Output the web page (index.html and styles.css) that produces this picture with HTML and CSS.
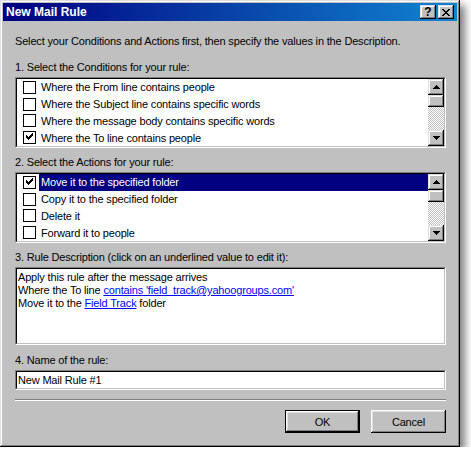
FILE: index.html
```html
<!DOCTYPE html>
<html>
<head>
<meta charset="utf-8">
<title>New Mail Rule</title>
<link rel="stylesheet" href="styles.css">
</head>
<body>
<div class="window">
  <div class="titlebar">
    <span class="title">New Mail Rule</span>
    <div class="caption-buttons">
      <div class="cap-btn help">?</div>
      <div class="cap-btn close">
        <svg width="8" height="7" viewBox="0 0 8 7" shape-rendering="crispEdges"><path d="M0 0h2v1H0zM6 0h2v1H6zM1 1h2v1H1zM5 1h2v1H5zM2 2h4v1H2zM3 3h2v1H3zM2 4h4v1H2zM1 5h2v1H1zM5 5h2v1H5zM0 6h2v1H0zM6 6h2v1H6z" fill="#000"/></svg>
      </div>
    </div>
  </div>
  <div class="body">
    <p class="intro">Select your Conditions and Actions first, then specify the values in the Description.</p>

    <div class="section-label first">1. Select the Conditions for your rule:</div>
    <div class="sunken listbox">
      <div class="sunken-inner list-inner">
        <ul class="rows">
          <li class="row"><span class="check"></span><span class="row-text">Where the From line contains people</span></li>
          <li class="row"><span class="check"></span><span class="row-text">Where the Subject line contains specific words</span></li>
          <li class="row"><span class="check"></span><span class="row-text">Where the message body contains specific words</span></li>
          <li class="row"><span class="check checked"><svg width="11" height="11" viewBox="0 0 11 11" shape-rendering="crispEdges"><path d="M8 1h1v3H8zM7 2h1v3H7zM6 3h1v3H6zM5 4h1v3H5zM4 5h1v3H4zM3 4h1v3H3zM2 3h1v3H2z" fill="#000"/></svg></span><span class="row-text">Where the To line contains people</span></li>
        </ul>
        <div class="scrollbar">
          <div class="sb-btn"><svg width="7" height="4" viewBox="0 0 7 4" shape-rendering="crispEdges"><path d="M3 0h1v1H3zM2 1h3v1H2zM1 2h5v1H1zM0 3h7v1H0z" fill="#000"/></svg></div>
          <div class="sb-thumb"></div>
          <div class="sb-track"></div>
          <div class="sb-btn"><svg width="7" height="4" viewBox="0 0 7 4" shape-rendering="crispEdges"><path d="M0 0h7v1H0zM1 1h5v1H1zM2 2h3v1H2zM3 3h1v1H3z" fill="#000"/></svg></div>
        </div>
      </div>
    </div>

    <div class="section-label">2. Select the Actions for your rule:</div>
    <div class="sunken listbox">
      <div class="sunken-inner list-inner">
        <ul class="rows">
          <li class="row selected"><span class="check checked"><svg width="11" height="11" viewBox="0 0 11 11" shape-rendering="crispEdges"><path d="M8 1h1v3H8zM7 2h1v3H7zM6 3h1v3H6zM5 4h1v3H5zM4 5h1v3H4zM3 4h1v3H3zM2 3h1v3H2z" fill="#000"/></svg></span><span class="row-text">Move it to the specified folder</span></li>
          <li class="row"><span class="check"></span><span class="row-text">Copy it to the specified folder</span></li>
          <li class="row"><span class="check"></span><span class="row-text">Delete it</span></li>
          <li class="row"><span class="check"></span><span class="row-text">Forward it to people</span></li>
        </ul>
        <div class="scrollbar">
          <div class="sb-btn"><svg width="7" height="4" viewBox="0 0 7 4" shape-rendering="crispEdges"><path d="M3 0h1v1H3zM2 1h3v1H2zM1 2h5v1H1zM0 3h7v1H0z" fill="#000"/></svg></div>
          <div class="sb-thumb"></div>
          <div class="sb-track"></div>
          <div class="sb-btn"><svg width="7" height="4" viewBox="0 0 7 4" shape-rendering="crispEdges"><path d="M0 0h7v1H0zM1 1h5v1H1zM2 2h3v1H2zM3 3h1v1H3z" fill="#000"/></svg></div>
        </div>
      </div>
    </div>

    <div class="section-label">3. Rule Description (click on an underlined value to edit it):</div>
    <div class="sunken descbox">
      <div class="sunken-inner desc-inner">
        <div>Apply this rule after the message arrives</div>
        <div>Where the To line <a class="link" href="#">contains 'field_track@yahoogroups.com'</a></div>
        <div>Move it to the <a class="link" href="#">Field Track</a> folder</div>
      </div>
    </div>

    <div class="section-label l4">4. Name of the rule:</div>
    <div class="sunken textbox">
      <div class="sunken-inner text-inner">New Mail Rule #1</div>
    </div>

    <div class="separator"></div>

    <div class="buttons">
      <div class="btn default">OK</div>
      <div class="btn">Cancel</div>
    </div>
  </div>
</div>
</body>
</html>
```

FILE: styles.css
```css
* { box-sizing: border-box; }
html, body { margin: 0; padding: 0; background: #fff; }
body {
  font-family: "Liberation Sans", Arial, sans-serif;
  font-size: 11px;
  letter-spacing: -0.17px;
  color: #000;
}

.window {
  width: 460px;
  height: 447px;
  background: #c0c0c0;
  padding: 3px;
  display: flex;
  flex-direction: column;
  box-shadow: inset -1px -1px #000, inset 1px 1px #dfdfdf, inset -2px -2px #808080, inset 2px 2px #fff, 5px 5px 8px rgba(0,0,0,0.5);
}

.titlebar {
  height: 18px;
  display: flex;
  align-items: center;
  justify-content: space-between;
  padding: 0 3px 0 3px;
  background: linear-gradient(to right, #000080, #1084d0);
}
.title {
  color: #fff;
  font-weight: bold;
  font-size: 12px;
  letter-spacing: 0;
  line-height: 18px;
}
.caption-buttons { display: flex; gap: 2px; }
.cap-btn {
  width: 16px;
  height: 14px;
  background: #c0c0c0;
  display: flex;
  align-items: center;
  justify-content: center;
  box-shadow: inset -1px -1px #000, inset 1px 1px #dfdfdf, inset -2px -2px #808080, inset 2px 2px #fff;
}
.cap-btn.help {
  font-weight: bold;
  font-size: 12px;
  letter-spacing: 0;
  line-height: 14px;
  padding-bottom: 1px;
}

.body {
  flex: 1;
  padding: 14px 11px 0 12px;
  display: flex;
  flex-direction: column;
}
.intro { margin: 0; line-height: 13px; }

.section-label {
  line-height: 13px;
  margin-top: 8px;
  margin-bottom: 3px;
}
.section-label.first { margin-top: 13px; }
.section-label.l4 { margin-top: 9px; }

.sunken {
  border: 1px solid;
  border-color: #808080 #fff #fff #808080;
}
.sunken-inner {
  height: 100%;
  border: 1px solid;
  border-color: #000 #c0c0c0 #c0c0c0 #000;
  background: #fff;
}

.listbox { height: 71px; }
.list-inner { display: flex; }
.rows {
  flex: 1;
  margin: 0;
  padding: 0;
  list-style: none;
  display: flex;
  flex-direction: column;
}
.row {
  flex: 1;
  display: flex;
  align-items: center;
  padding-left: 6px;
}
.check {
  width: 13px;
  height: 13px;
  border: 1px solid #000;
  background: #fff;
  flex: none;
  display: flex;
}
.row-text {
  flex: 1;
  align-self: stretch;
  display: flex;
  align-items: center;
  margin-left: 3px;
  padding-left: 2px;
}
.row.selected .row-text {
  background: #000080;
  color: #fff;
}

.scrollbar {
  width: 16px;
  flex: none;
  display: flex;
  flex-direction: column;
}
.sb-btn {
  height: 16px;
  flex: none;
  background: #c0c0c0;
  display: flex;
  align-items: center;
  justify-content: center;
  box-shadow: inset -1px -1px #000, inset 1px 1px #dfdfdf, inset -2px -2px #808080, inset 2px 2px #fff;
}
.sb-thumb {
  height: 12px;
  flex: none;
  background: #c0c0c0;
  box-shadow: inset -1px -1px #000, inset 1px 1px #dfdfdf, inset -2px -2px #808080, inset 2px 2px #fff;
}
.sb-track {
  flex: 1;
  background-image: repeating-conic-gradient(#c0c0c0 0% 25%, #fff 0% 50%);
  background-size: 2px 2px;
}

.descbox { height: 78px; }
.desc-inner {
  padding: 2px 0 0 1px;
  line-height: 13px;
}
.link { color: #0000ff; text-decoration: underline; }

.textbox { height: 20px; }
.text-inner {
  padding-left: 1px;
  line-height: 16px;
}

.separator {
  margin-top: 9px;
  height: 2px;
  border-top: 1px solid #808080;
  border-bottom: 1px solid #fff;
}

.buttons {
  margin-top: 9px;
  display: flex;
  justify-content: flex-end;
  gap: 11px;
}
.btn {
  width: 75px;
  height: 23px;
  display: flex;
  align-items: center;
  justify-content: center;
  background: #c0c0c0;
  box-shadow: inset -1px -1px #000, inset 1px 1px #fff, inset -2px -2px #808080, inset 2px 2px #dfdfdf;
}
.btn.default {
  box-shadow: inset -2px -2px #000, inset 1px 1px #000, inset 2px 2px #fff, inset -3px -3px #808080, inset 3px 3px #dfdfdf;
}
```
